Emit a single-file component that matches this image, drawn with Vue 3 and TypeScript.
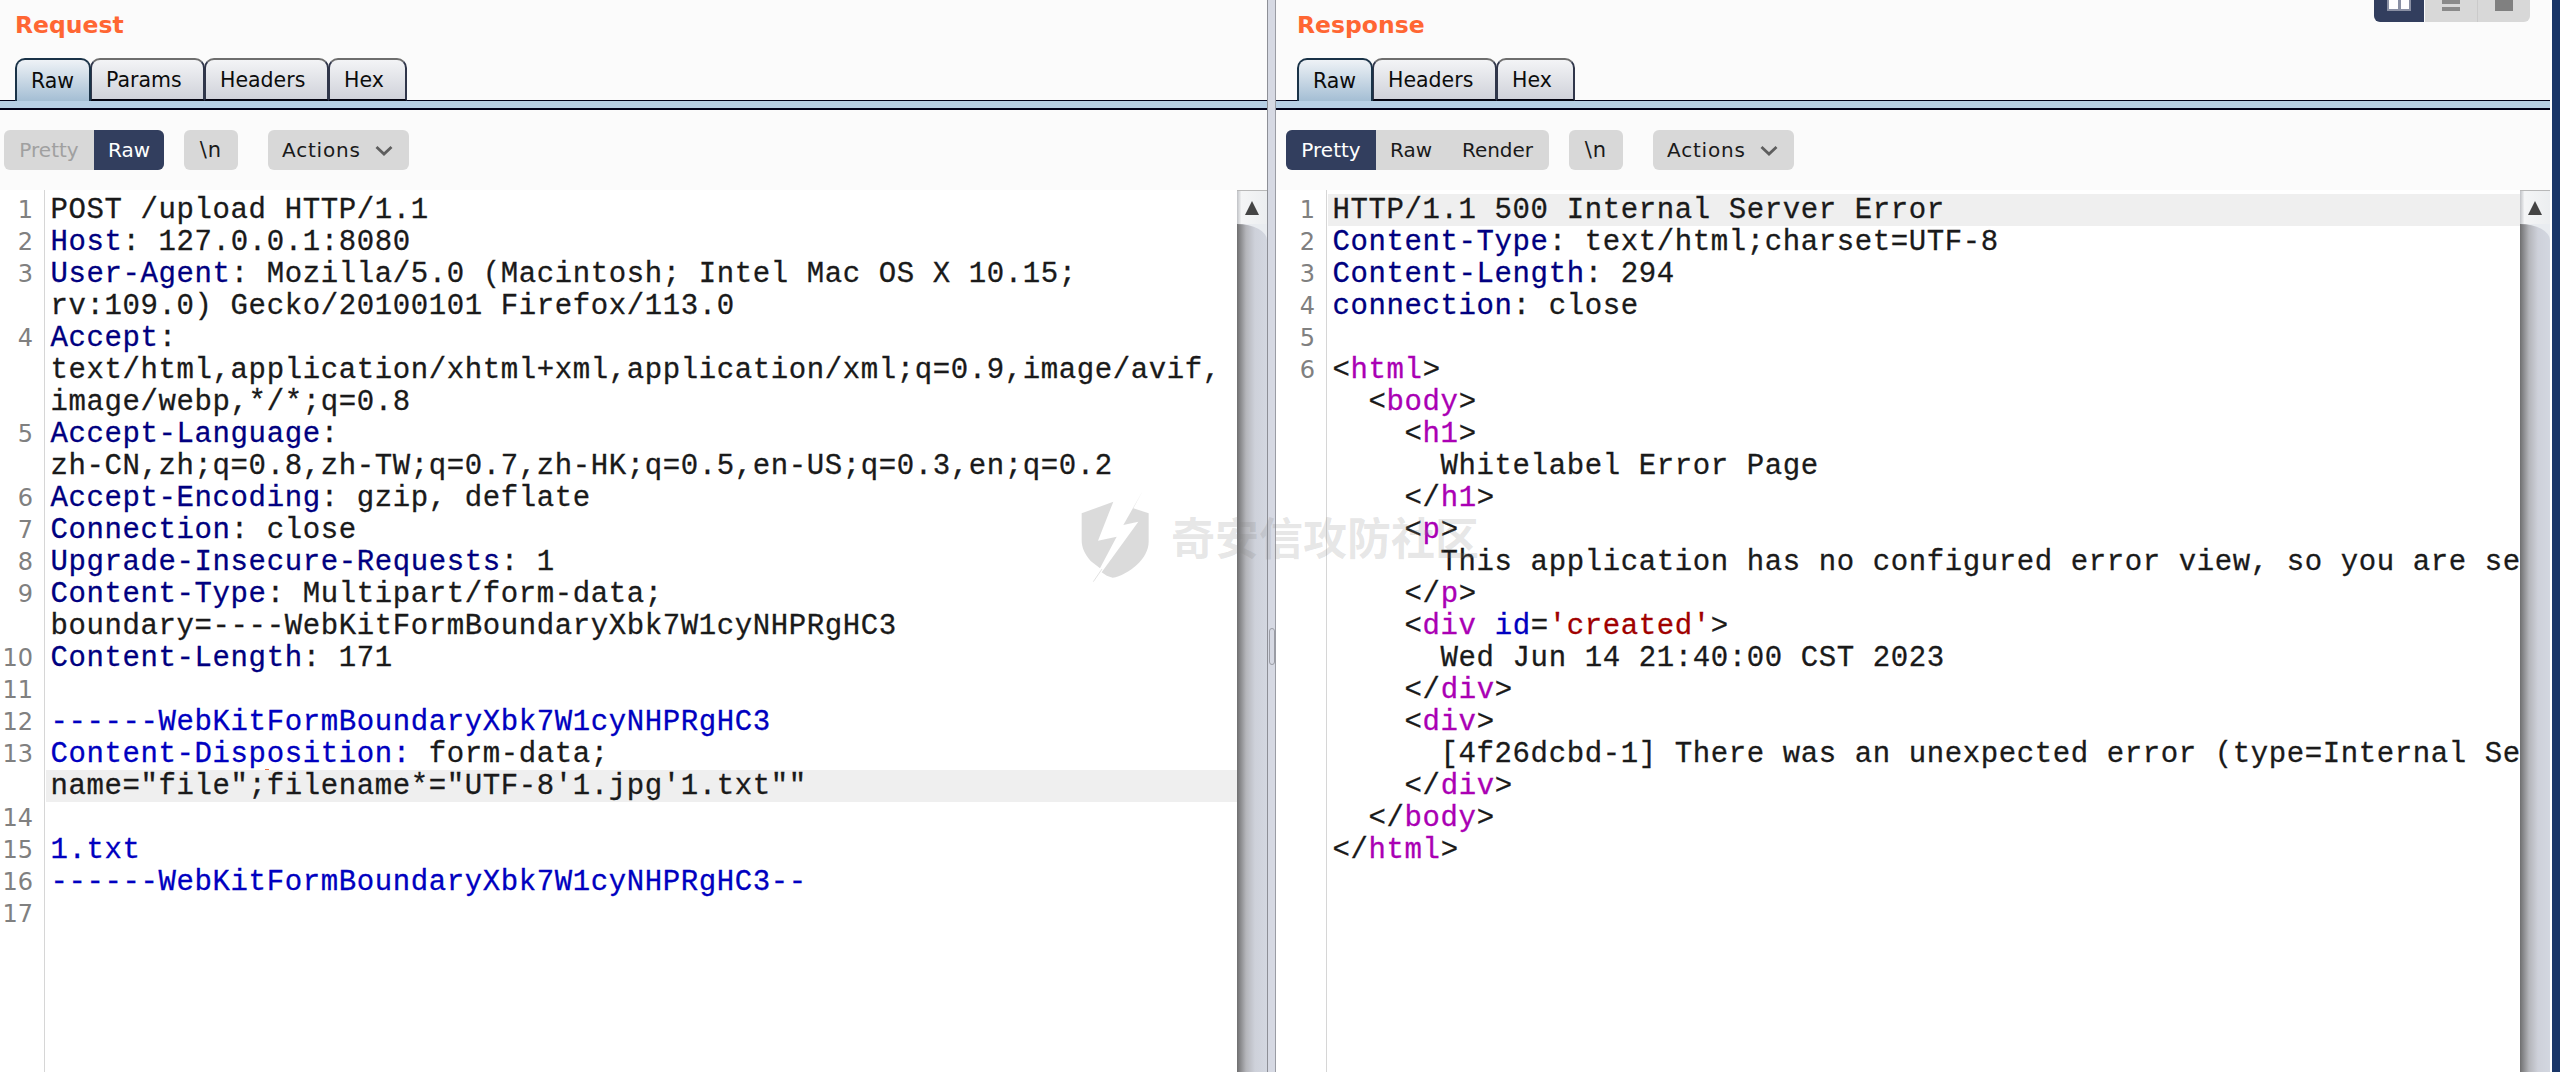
<script setup lang="ts">
type Seg = { t: string; c?: string }
type Row = { n?: number; segs: Seg[]; hl?: boolean }

const key = (k: string, v: string): Seg[] => [{ t: k, c: 'k' }, { t: ': ' + v }]
const leftRows: Row[] = [
  { n: 1, segs: [{ t: 'POST /upload HTTP/1.1' }] },
  { n: 2, segs: key('Host', '127.0.0.1:8080') },
  { n: 3, segs: key('User-Agent', 'Mozilla/5.0 (Macintosh; Intel Mac OS X 10.15;') },
  { segs: [{ t: 'rv:109.0) Gecko/20100101 Firefox/113.0' }] },
  { n: 4, segs: key('Accept', '') },
  { segs: [{ t: 'text/html,application/xhtml+xml,application/xml;q=0.9,image/avif,' }] },
  { segs: [{ t: 'image/webp,*/*;q=0.8' }] },
  { n: 5, segs: key('Accept-Language', '') },
  { segs: [{ t: 'zh-CN,zh;q=0.8,zh-TW;q=0.7,zh-HK;q=0.5,en-US;q=0.3,en;q=0.2' }] },
  { n: 6, segs: key('Accept-Encoding', 'gzip, deflate') },
  { n: 7, segs: key('Connection', 'close') },
  { n: 8, segs: key('Upgrade-Insecure-Requests', '1') },
  { n: 9, segs: key('Content-Type', 'Multipart/form-data;') },
  { segs: [{ t: 'boundary=----WebKitFormBoundaryXbk7W1cyNHPRgHC3' }] },
  { n: 10, segs: key('Content-Length', '171') },
  { n: 11, segs: [] },
  { n: 12, segs: [{ t: '------WebKitFormBoundaryXbk7W1cyNHPRgHC3', c: 'b' }] },
  { n: 13, segs: [{ t: 'Content-Disposition:', c: 'b' }, { t: ' form-data;' }] },
  { segs: [{ t: 'name="file";filename*="UTF-8\'1.jpg\'1.txt""' }], hl: true },
  { n: 14, segs: [] },
  { n: 15, segs: [{ t: '1.txt', c: 'b' }] },
  { n: 16, segs: [{ t: '------WebKitFormBoundaryXbk7W1cyNHPRgHC3--', c: 'b' }] },
  { n: 17, segs: [] }
]

const tag = (indent: string, open: string, name: string): Row => ({
  segs: [{ t: indent + open }, { t: name, c: 'p' }, { t: '>' }]
})
const withNum = (n: number, r: Row): Row => ({ ...r, n })
const rightRows: Row[] = [
  { n: 1, segs: [{ t: 'HTTP/1.1 500 Internal Server Error' }], hl: true },
  { n: 2, segs: key('Content-Type', 'text/html;charset=UTF-8') },
  { n: 3, segs: key('Content-Length', '294') },
  { n: 4, segs: key('connection', 'close') },
  { n: 5, segs: [] },
  withNum(6, tag('', '<', 'html')),
  tag('  ', '<', 'body'),
  tag('    ', '<', 'h1'),
  { segs: [{ t: '      Whitelabel Error Page' }] },
  tag('    ', '</', 'h1'),
  tag('    ', '<', 'p'),
  { segs: [{ t: '      This application has no configured error view, so you are seeing this as a fallback.' }] },
  tag('    ', '</', 'p'),
  {
    segs: [
      { t: '    <' },
      { t: 'div', c: 'p' },
      { t: ' ' },
      { t: 'id', c: 'b' },
      { t: '=' },
      { t: "'created'", c: 'r' },
      { t: '>' }
    ]
  },
  { segs: [{ t: '      Wed Jun 14 21:40:00 CST 2023' }] },
  tag('    ', '</', 'div'),
  tag('    ', '<', 'div'),
  { segs: [{ t: '      [4f26dcbd-1] There was an unexpected error (type=Internal Server Error, status=500).' }] },
  tag('    ', '</', 'div'),
  tag('  ', '</', 'body'),
  tag('', '</', 'html')
]
</script>

<template>
  <div class="app">
    <section class="pane pane-left">
      <header class="head"><h2 class="title">Request</h2></header>
      <nav class="tabs">
        <span class="tab t-raw active">Raw</span>
        <span class="tab t-params">Params</span>
        <span class="tab t-headers">Headers</span>
        <span class="tab t-hex">Hex</span>
      </nav>
      <div class="bar"></div>
      <div class="toolbar">
        <div class="seg">
          <span class="opt opt-pretty off">Pretty</span>
          <span class="opt opt-raw on">Raw</span>
        </div>
        <span class="btn btn-n">\n</span>
        <span class="btn btn-actions"><span class="act">Actions</span>
          <svg class="chev" width="18" height="11" viewBox="0 0 18 11"><path d="M1.5 2 9 9l7.5-7" fill="none" stroke="#5e5e5e" stroke-width="2.8" /></svg>
        </span>
      </div>
      <div class="editor">
        <div class="gutter gutter-left">
          <div v-for="(r, i) in leftRows" :key="i" class="num">{{ r.n }}</div>
        </div>
        <div class="code">
          <div v-for="(r, i) in leftRows" :key="i" class="row" :class="{ hl: r.hl }">
            <span v-for="(s, j) in r.segs" :key="j" :class="s.c">{{ s.t }}</span>
          </div>
        </div>
        <div class="scroll">
          <div class="scroll-up"><i class="arrow"></i></div>
          <div class="thumb"></div>
        </div>
      </div>
    </section>

    <div class="splitter"><i class="grip"></i></div>

    <section class="pane pane-right">
      <header class="head">
        <h2 class="title">Response</h2>
        <div class="views">
          <span class="view view-on"><i class="ic-cols"><b></b><b></b></i></span>
          <span class="view"><i class="ic-rows"><b></b><b></b></i></span>
          <span class="view view-last"><i class="ic-one"></i></span>
        </div>
      </header>
      <nav class="tabs">
        <span class="tab t-raw active">Raw</span>
        <span class="tab t-headers">Headers</span>
        <span class="tab t-hex">Hex</span>
      </nav>
      <div class="bar"></div>
      <div class="toolbar">
        <div class="seg">
          <span class="opt opt-pretty on">Pretty</span>
          <span class="opt opt-raw">Raw</span>
          <span class="opt opt-render">Render</span>
        </div>
        <span class="btn btn-n">\n</span>
        <span class="btn btn-actions"><span class="act">Actions</span>
          <svg class="chev" width="18" height="11" viewBox="0 0 18 11"><path d="M1.5 2 9 9l7.5-7" fill="none" stroke="#5e5e5e" stroke-width="2.8" /></svg>
        </span>
      </div>
      <div class="editor">
        <div class="gutter gutter-right">
          <div v-for="(r, i) in rightRows" :key="i" class="num">{{ r.n }}</div>
        </div>
        <div class="code">
          <div v-for="(r, i) in rightRows" :key="i" class="row" :class="{ hl: r.hl }">
            <span v-for="(s, j) in r.segs" :key="j" :class="s.c">{{ s.t }}</span>
          </div>
        </div>
        <div class="scroll">
          <div class="scroll-up"><i class="arrow"></i></div>
          <div class="thumb"></div>
        </div>
      </div>
    </section>

    <div class="edge"></div>

    <i class="tick"></i>

    <div class="watermark">
      <svg width="100" height="100" viewBox="0 0 300 300">
        <path d="M35 85 130 50 84 167 140 155 90 250 62 228C45 208 35 190 35 165Z" fill="#cfcfcf" fill-opacity=".75" />
        <path d="M218 18 190 70 236 85V170C236 195 222 220 200 240 180 258 150 276 128 278 115 276 105 270 95 262L205 110 160 120Z" fill="#cfcfcf" fill-opacity=".75" />
        <path d="M96 252 70 290" stroke="#cfcfcf" stroke-opacity=".6" stroke-width="3" fill="none" />
      </svg>
      <span class="wm-text">奇安信攻防社区</span>
    </div>
  </div>
</template>

<style>
html, body { margin: 0; background: #fff; }
</style>

<style scoped>
.app {
  position: relative;
  display: flex;
  width: 2560px;
  height: 1072px;
  overflow: hidden;
  background: #fff;
  font-family: "DejaVu Sans", sans-serif;
  color: #1a1a1a;
}
.pane { display: flex; flex-direction: column; min-width: 0; background: #fbfbfb; }
.pane-left { width: 1267px; flex: none; }
.pane-right { width: 1274px; flex: none; }
.head {
  display: flex;
  justify-content: space-between;
  align-items: flex-start;
  height: 58px;
  padding-left: 15px;
  box-sizing: border-box;
}
.pane-right .head { padding-left: 21px; padding-right: 20px; }
.title {
  margin: 11px 0 0;
  font-size: 23.5px;
  line-height: 28px;
  font-weight: 700;
  color: #ff6633;
}
.views { display: flex; height: 22px; }
.view {
  width: 52px;
  background: #d8d8d8;
  display: flex;
  justify-content: center;
  border-right: 1px solid #cacaca;
}
.view-on { width: 50px; background: #323e5e; border: 0; border-radius: 0 0 0 6px; margin-right: 1px; }
.view-last { border: 0; border-radius: 0 0 6px 0; }
.ic-cols, .ic-rows { display: flex; height: 11px; }
.ic-cols { width: 24px; gap: 3px; background: #8a90a4; padding: 0 2px; box-sizing: border-box; }
.ic-cols b { flex: 1; background: #fff; height: 9px; }
.ic-rows { flex-direction: column; width: 18px; gap: 3px; height: 11px; }
.ic-rows b { height: 4px; background: #8a8a8a; }
.ic-one { width: 18px; height: 11px; background: #808080; }

.tabs {
  position: relative;
  z-index: 1;
  display: flex;
  height: 43px;
  margin-bottom: -1px;
  padding-left: 15px;
}
.pane-right .tabs { padding-left: 21px; }
.tab {
  position: relative;
  display: flex;
  align-items: center;
  box-sizing: border-box;
  padding-left: 14px;
  font-size: 20.5px;
  color: #0c0c0c;
  background: linear-gradient(#f3f4f6, #d0d2da);
  border: 2px solid #30364a;
  border-top-color: #6e6e6e;
  border-bottom-color: #050512;
  border-radius: 10px 10px 0 0;
  margin-left: -1px;
}
.t-raw { width: 76px; margin-left: 0; }
.t-params { width: 115px; }
.t-headers { width: 125px; }
.t-hex { width: 79px; }
.tab.active {
  background: linear-gradient(#eef2f6, #a4bed4);
  border-color: #1a3348;
  border-bottom: 0;
  z-index: 1;
}
.bar {
  height: 10px;
  box-sizing: border-box;
  background: #b7cfe5;
  border-top: 1px solid #02021a;
  border-bottom: 2px solid #02021a;
}
.toolbar {
  display: flex;
  align-items: center;
  height: 80px;
  padding-left: 4px;
  box-sizing: border-box;
  font-size: 20px;
}
.pane-right .toolbar { padding-left: 10px; }
.seg {
  display: flex;
  height: 40px;
  background: #d8d8d8;
  border-radius: 6px;
  overflow: hidden;
}
.opt { display: flex; align-items: center; justify-content: center; }
.opt-pretty { width: 90px; }
.opt-raw { width: 70px; }
.opt-render { width: 103px; }
.on { background: #323e5e; color: #fff; }
.off { color: #a0a0a0; }
.btn {
  display: flex;
  align-items: center;
  height: 40px;
  background: #d8d8d8;
  border-radius: 6px;
  box-sizing: border-box;
}
.btn-n { width: 54px; margin-left: 20px; justify-content: center; font-size: 21px; letter-spacing: 1px; }
.btn-actions { width: 141px; margin-left: 30px; padding-left: 14px; gap: 14px; }
.act { letter-spacing: 0.8px; }
.chev { flex: none; }

.editor { flex: 1; display: flex; min-height: 0; background: #fff; }
.gutter {
  flex: none;
  box-sizing: border-box;
  padding-top: 4px;
  border-right: 1px solid #d6d6d6;
}
.gutter-left { width: 45px; }
.gutter-right { width: 51px; }
.num {
  height: 32px;
  line-height: 32px;
  padding-right: 11px;
  text-align: right;
  font-size: 24px;
  color: #808080;
}
.code {
  flex: 1;
  min-width: 0;
  overflow: hidden;
  padding-top: 4px;
  padding-left: 1px;
  font-family: "Liberation Mono", monospace;
  font-size: 29px;
  letter-spacing: 0.6px;
  -webkit-text-stroke: 0.3px;
}
.row {
  height: 32px;
  line-height: 34px;
  padding-left: 4.6px;
  white-space: pre;
  color: #1a1a1a;
}
.row.hl { background: #efefef; }
.k { color: #000080; }
.b { color: #0000c0; }
.p { color: #aa00b4; }
.r { color: #a00000; }

.scroll {
  flex: none;
  width: 30px;
  display: flex;
  flex-direction: column;
  background: #e9ecf0;
}
.scroll-up {
  flex: none;
  height: 34px;
  display: flex;
  justify-content: center;
  padding-top: 10px;
  box-sizing: border-box;
  background: linear-gradient(90deg, #c0c2c6, #f4f5f6 15%, #eceef0);
  border-top: 1px solid #b8b8b8;
}
.arrow {
  width: 0;
  height: 0;
  border-left: 7px solid transparent;
  border-right: 7px solid transparent;
  border-bottom: 14px solid #444;
}
.thumb {
  flex: 1;
  background: linear-gradient(90deg, #6f6f70, #b4b5ba 30%, #ced1da 60%, #d3d7e0);
  border-top-right-radius: 30px 16px;
}
.splitter {
  flex: none;
  position: relative;
  width: 9px;
  box-sizing: border-box;
  background: #d6d9e3;
  border-left: 1px solid #8d8f96;
  border-right: 1px solid #9a9ca4;
}
.grip {
  position: absolute;
  left: 1px;
  top: 628px;
  width: 6px;
  height: 37px;
  box-sizing: border-box;
  border: 1px solid #9a9ca4;
  border-radius: 3px;
}
.edge {
  flex: none;
  width: 10px;
  box-sizing: border-box;
  border-left: 2px solid #fff;
  background: #1a3668;
}
.tick {
  position: absolute;
  left: 265px;
  top: 769px;
  width: 4px;
  height: 1px;
  background: #f07040;
}
.watermark {
  position: absolute;
  left: 1070px;
  top: 485px;
  display: flex;
  align-items: center;
  gap: 1px;
  pointer-events: none;
}
.wm-text {
  font-family: "Noto Sans CJK SC", sans-serif;
  font-size: 44px;
  font-weight: 700;
  color: rgba(130, 130, 130, 0.2);
  margin-top: 2px;
}
</style>
